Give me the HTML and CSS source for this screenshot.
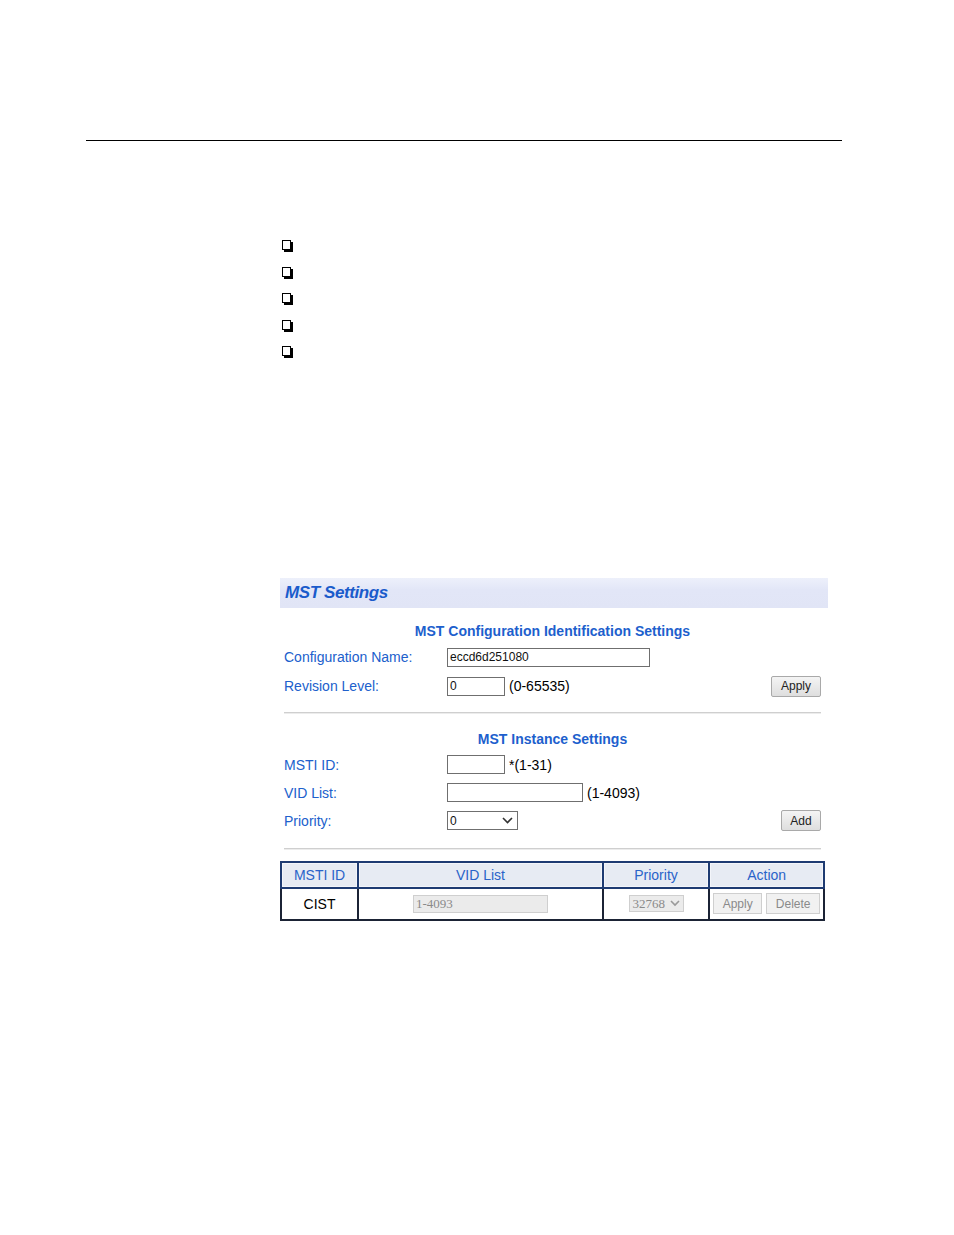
FILE: index.html
```html
<!DOCTYPE html>
<html>
<head>
<meta charset="utf-8">
<link rel="stylesheet" href="styles.css">
</head>
<body>
<div class="page">
  <div class="rule"></div>
  <ul class="bullets">
    <li><span class="box"></span></li>
    <li><span class="box"></span></li>
    <li><span class="box"></span></li>
    <li><span class="box"></span></li>
    <li><span class="box"></span></li>
  </ul>

  <div class="panel">
    <div class="panel-head">MST Settings</div>
    <div class="panel-body">
      <div class="subtitle first">MST Configuration Identification Settings</div>
      <div class="row">
        <div class="label">Configuration Name:</div>
        <div class="field"><span class="input w-name">eccd6d251080</span></div>
      </div>
      <div class="row">
        <div class="label">Revision Level:</div>
        <div class="field"><span class="input w-small">0</span><span class="hint">(0-65535)</span></div>
        <span class="btn w-apply">Apply</span>
      </div>
      <div class="sep"></div>

      <div class="subtitle second">MST Instance Settings</div>
      <div class="row r28">
        <div class="label">MSTI ID:</div>
        <div class="field"><span class="input w-small"></span><span class="hint">*(1-31)</span></div>
      </div>
      <div class="row r28">
        <div class="label">VID List:</div>
        <div class="field"><span class="input w-vid"></span><span class="hint">(1-4093)</span></div>
      </div>
      <div class="row r28">
        <div class="label">Priority:</div>
        <div class="field">
          <span class="input select w-sel">0
            <svg class="chev" width="11" height="7" viewBox="0 0 11 7"><path d="M1 1 L5.5 5.5 L10 1" fill="none" stroke="#333" stroke-width="1.6"/></svg>
          </span>
        </div>
        <span class="btn w-add">Add</span>
      </div>
      <div class="sep sep2"></div>
    </div>

    <table class="grid">
      <colgroup>
        <col class="c1"><col class="c2"><col class="c3"><col class="c4">
      </colgroup>
      <thead>
        <tr>
          <th>MSTI ID</th>
          <th>VID List</th>
          <th>Priority</th>
          <th>Action</th>
        </tr>
      </thead>
      <tbody>
        <tr>
          <td>CIST</td>
          <td><span class="dis-input">1-4093</span></td>
          <td><span class="dis-select">32768
            <svg class="chev" width="10" height="7" viewBox="0 0 10 7"><path d="M1 1 L5 5 L9 1" fill="none" stroke="#999" stroke-width="1.6"/></svg></span></td>
          <td><span class="dis-btn w-a2">Apply</span><span class="dis-btn w-del">Delete</span></td>
        </tr>
      </tbody>
    </table>
  </div>
</div>
</body>
</html>
```

FILE: styles.css
```css
html, body {
  margin: 0;
  padding: 0;
  background: #ffffff;
}
body {
  font-family: "Liberation Sans", Arial, sans-serif;
  color: #000;
}
.page {
  width: 954px;
  height: 1235px;
  overflow: hidden;
  padding-top: 140px;
  box-sizing: border-box;
}
.rule {
  margin-left: 86px;
  width: 756px;
  height: 1px;
  background: #000;
}
.bullets {
  list-style: none;
  margin: 91px 0 0 0;
  padding: 0 0 0 282px;
}
.bullets li {
  height: 26.5px;
  display: flex;
  align-items: center;
}
.box {
  display: inline-block;
  width: 7px;
  height: 8px;
  border: 1px solid #000;
  box-shadow: 2px 2px 0 #000;
}
.panel {
  margin: 213px 0 0 280px;
  width: 548px;
}
.panel-head {
  height: 30px;
  line-height: 30px;
  padding-left: 5px;
  background: linear-gradient(to bottom, #edf0fb 0%, #e2e6f7 40%, #e1e5f6 100%);
  background-color: #e3e7f7;
  color: #1a5bcb;
  font-weight: bold;
  font-style: italic;
  font-size: 17px;
  letter-spacing: -0.4px;
}
.panel-body {
  padding: 0 7px 0 4px;
}
.subtitle {
  text-align: center;
  color: #1d5fcd;
  font-weight: bold;
  font-size: 14px;
  height: 20px;
  line-height: 20px;
}
.subtitle.first {
  margin-top: 13px;
  margin-bottom: 2px;
}
.subtitle.second {
  margin-top: 16px;
  margin-bottom: 2px;
}
.row {
  display: flex;
  align-items: center;
  height: 29px;
}
.row.r28 {
  height: 28px;
}
.label {
  width: 163px;
  flex: none;
  color: #2060cc;
  font-size: 14px;
}
.field {
  flex: 1;
  display: flex;
  align-items: center;
}
.input {
  display: inline-flex;
  align-items: center;
  box-sizing: border-box;
  height: 19px;
  border: 1px solid #6f6f6f;
  background: #fff;
  font-size: 12px;
  padding-left: 2px;
  color: #111;
}
.w-name { width: 203px; }
.w-small { width: 58px; }
.w-vid { width: 136px; }
.w-sel {
  width: 71px;
  justify-content: space-between;
  padding-right: 4px;
}
.hint {
  margin-left: 4px;
  font-size: 14px;
}
.btn {
  display: inline-flex;
  align-items: center;
  justify-content: center;
  box-sizing: border-box;
  height: 21px;
  border: 1px solid #a9a9a9;
  border-radius: 2px;
  background: linear-gradient(to bottom, #f4f4f4, #dedede);
  font-size: 12px;
  color: #222;
  flex: none;
}
.w-apply { width: 50px; }
.w-add { width: 40px; }
.sep {
  margin-top: 11px;
  height: 1px;
  background: #cfcfcf;
  box-shadow: 0 1px 0 #ececec;
}
.sep.sep2 {
  margin-top: 13px;
}
.grid {
  margin-top: 12px;
  border-collapse: collapse;
  width: 545px;
  table-layout: fixed;
  font-size: 14px;
}
.c1 { width: 76px; }
.c2 { width: 241px; }
.c3 { width: 105px; }
.c4 { width: 113px; }
.grid th, .grid td {
  border: 2px solid #1b2335;
  text-align: center;
  padding: 0;
}
.grid th {
  height: 24px;
  background: #e7ebf3;
  color: #2a63c9;
  font-weight: normal;
  border-color: #1e3b72;
  box-shadow: inset 0 0 0 1px #f3f5fa;
}
.grid td {
  height: 30px;
}
.dis-input {
  display: inline-flex;
  align-items: center;
  box-sizing: border-box;
  width: 135px;
  height: 18px;
  border: 1px solid #cfcfcf;
  background: #ebebeb;
  color: #8a8a8a;
  font-family: "Liberation Serif", "Times New Roman", serif;
  font-size: 13px;
  padding-left: 2px;
  vertical-align: middle;
}
.dis-select {
  display: inline-flex;
  align-items: center;
  justify-content: space-between;
  box-sizing: border-box;
  width: 55px;
  height: 17px;
  border: 1px solid #cfcfcf;
  background: #ebebeb;
  color: #8a8a8a;
  font-family: "Liberation Serif", "Times New Roman", serif;
  font-size: 13px;
  padding: 0 3px 0 3px;
  vertical-align: middle;
}
.dis-btn {
  display: inline-flex;
  align-items: center;
  justify-content: center;
  box-sizing: border-box;
  height: 21px;
  border: 1px solid #cfcfcf;
  background: #f1f1f1;
  color: #8a8a8a;
  font-size: 12px;
  vertical-align: middle;
}
.w-a2 { width: 49px; }
.w-del { width: 54px; margin-left: 4px; }
```
